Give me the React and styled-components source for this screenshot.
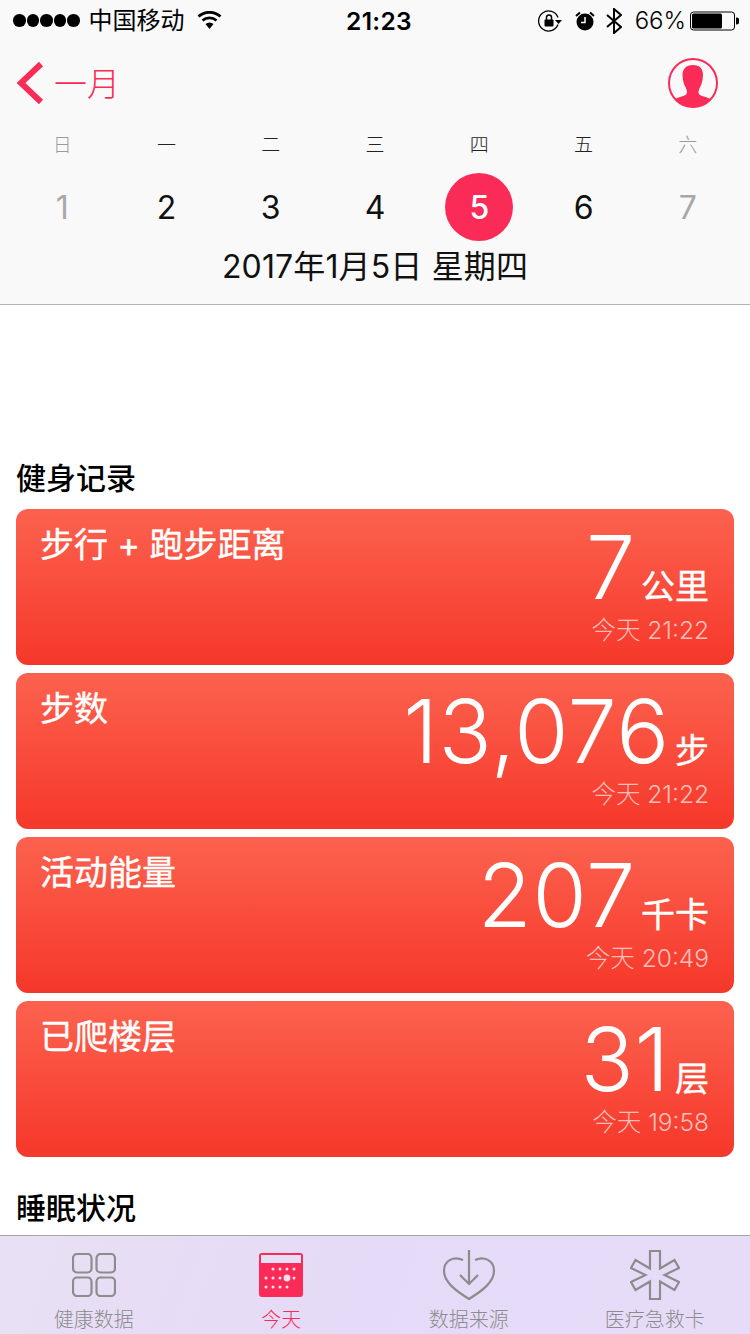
import React from "react";
import styled, { createGlobalStyle } from "styled-components";

const CJK = `"Noto Sans CJK SC", sans-serif`;
const PINK = "#fb2b57";

const GlobalStyle = createGlobalStyle`
	html, body { margin: 0; padding: 0; background: #fff; }
	* { box-sizing: border-box; }
`;

const Page = styled.div`
	width: 750px;
	height: 1334px;
	display: flex;
	flex-direction: column;
	overflow: hidden;
	font-family: "Inter", ${CJK};
	background: #fff;
`;

const Header = styled.header`
	height: 305px;
	flex: none;
	background: #f9f9f9;
	border-bottom: 1px solid #b4b4b4;
`;

const StatusBar = styled.div`
	height: 41px;
	padding: 0 11px 0 13px;
	display: grid;
	grid-template-columns: 1fr auto 1fr;
	align-items: center;
	color: #000;
`;

const StatusSide = styled.div`
	display: flex;
	align-items: center;
	justify-content: ${(p) => (p.$end ? "flex-end" : "flex-start")};
	gap: ${(p) => (p.$end ? "11px" : "0")};
`;

const Dots = styled.div`
	display: flex;
	gap: 1px;
	margin-right: 9px;
`;

const Dot = styled.span`
	width: 12.5px;
	height: 12.5px;
	border-radius: 50%;
	background: #000;
`;

const Carrier = styled.span`
	font-size: 24px;
	line-height: 30px;
	margin-right: 12px;
`;

const Clock = styled.span`
	font-size: 24.5px;
	font-weight: 600;
	letter-spacing: 0.3px;
	margin-left: 6px;
`;

const Battery = styled.span`
	font-size: 24px;
	margin-left: 2px;
	margin-right: -7px;
	font-weight: 300;
`;

const NavRow = styled.div`
	height: 84px;
	padding: 0 32px 0 16px;
	display: flex;
	align-items: center;
	justify-content: space-between;
	color: ${PINK};
`;

const BackLink = styled.div`
	display: flex;
	align-items: center;
	gap: 8px;
	font-family: ${CJK};
	font-size: 33px;
	line-height: 38px;
	font-weight: 300;
`;

const BackLabel = styled.span`
	padding-bottom: 2px;
`;

const Week = styled.div`
	display: grid;
	grid-template-columns: repeat(7, 1fr);
	padding: 0 10px;
	justify-items: center;
`;

const DayName = styled.div`
	height: 48px;
	font-family: ${CJK};
	font-size: 19px;
	font-weight: 300;
	line-height: 38px;
	color: ${(p) => (p.$muted ? "#9a9a9a" : "#222")};
`;

const DayNum = styled.div`
	width: 68px;
	height: 68px;
	border-radius: 50%;
	display: flex;
	align-items: center;
	justify-content: center;
	font-family: "Inter", sans-serif;
	font-size: 32px;
	font-weight: ${(p) => (p.$active ? 500 : 400)};
	background: ${(p) => (p.$active ? PINK : "transparent")};
	color: ${(p) => (p.$active ? "#fff" : p.$muted ? "#a8a8a8" : "#111")};
`;

const DateLine = styled.div`
	text-align: center;
	font-size: 32px;
	line-height: 52px;
	font-weight: 400;
	letter-spacing: 0.15px;
	color: #111;
`;

const Content = styled.main`
	flex: 1;
	min-height: 0;
	padding: 151px 16px 0;
`;

const SectionTitle = styled.h2`
	margin: 0;
	font-family: ${CJK};
	font-size: 30px;
	font-weight: 500;
	line-height: 40px;
	color: #000;
`;

const CardList = styled.div`
	margin: 13px 0 29px;
	display: flex;
	flex-direction: column;
	gap: 8px;
`;

const Card = styled.section`
	height: 156px;
	padding: 10px 25px 0 24px;
	border-radius: 12px;
	display: flex;
	justify-content: space-between;
	color: #fff;
	background: linear-gradient(180deg, #fc624f 0%, #f63a2c 94%, #f2392c 100%);
`;

const CardTitle = styled.div`
	margin-top: 2px;
	font-family: "Inter", ${CJK};
	font-size: 34px;
	font-weight: 400;
	line-height: 48px;
	-webkit-text-stroke: 0.4px #fff;
`;

const Readout = styled.div`
	display: flex;
	flex-direction: column;
	align-items: flex-end;
`;

const ValueRow = styled.div`
	display: flex;
	align-items: baseline;
	gap: 5px;
	height: 96px;
	line-height: 96px;
`;

const Value = styled.span`
	font-family: "Inter", sans-serif;
	font-size: 88px;
	font-weight: 280;
	letter-spacing: 0.8px;
`;

const Unit = styled.span`
	font-family: ${CJK};
	font-size: 34px;
	font-weight: 400;
	-webkit-text-stroke: 0.4px #fff;
`;

const Stamp = styled.div`
	font-size: 24.5px;
	line-height: 30px;
	font-weight: 300;
	color: rgba(255, 255, 255, 0.68);
`;

const TabBar = styled.nav`
	height: 99px;
	flex: none;
	border-top: 1px solid #a9a6a4;
	display: grid;
	grid-template-columns: repeat(4, 1fr);
	background: linear-gradient(110deg, #e8e0f4 0%, #e5daf7 50%, #e7dcf8 100%);
`;

const Tab = styled.div`
	display: flex;
	flex-direction: column;
	align-items: center;
	padding-top: 13px;
	color: ${(p) => (p.$active ? PINK : "#8d8b8e")};

	&:last-child {
		padding-right: 3px;
	}
`;

const TabIcon = styled.div`
	height: 52px;
	display: flex;
	align-items: center;
	justify-content: center;
`;

const TabLabel = styled.span`
	margin-top: 5px;
	font-family: ${CJK};
	font-size: 20px;
	font-weight: 300;
	line-height: 26px;
	white-space: nowrap;
`;

function Wifi() {
	return (
		<svg width="25" height="19" viewBox="0 0 25 19">
			<path d="M12.5 18l-4-5a6 6 0 0 1 8 0z" fill="#000" />
			<path d="M5.5 9.5a10.5 10.5 0 0 1 14 0M1.5 5.5a16.5 16.5 0 0 1 22 0" fill="none" stroke="#000" strokeWidth="2.8" />
		</svg>
	);
}

function RotationLock() {
	return (
		<svg width="26" height="22" viewBox="0 0 26 22">
			<path d="M20 7.500A10 10 0 1 0 20 14.500" fill="none" stroke="#000" strokeWidth="1.300" />
			<path d="M17 10h7l-3.500 4z" fill="#000" />
			<rect x="6.500" y="9.500" width="9" height="7" rx="1" fill="#000" />
			<path d="M8.500 10V7.500a2.500 2.500 0 0 1 5 0V10" fill="none" stroke="#000" strokeWidth="1.500" />
		</svg>
	);
}

function Alarm() {
	return (
		<svg width="20" height="20" viewBox="0 0 20 20">
			<circle cx="10" cy="11" r="8.500" fill="#000" />
			<path d="M10 6v5.500H6" fill="none" stroke="#fff" strokeWidth="1.500" />
			<path d="M1 5l4-3.500M19 5l-4-3.500" stroke="#000" strokeWidth="2" />
		</svg>
	);
}

function Bluetooth() {
	return (
		<svg width="16" height="26" viewBox="0 0 16 26">
			<path d="M1 7l14 12-7 6V1l7 6L1 19" fill="none" stroke="#000" strokeWidth="2" />
		</svg>
	);
}

function BatteryIcon() {
	return (
		<svg width="49" height="20" viewBox="0 0 49 20">
			<rect x="0.500" y="1" width="44" height="18" rx="3" fill="none" stroke="#000" strokeWidth="1" />
			<rect x="2" y="2.500" width="30" height="15" rx="1.500" fill="#000" />
			<path d="M46 6.500a3.500 3.500 0 0 1 0 7z" fill="#000" />
		</svg>
	);
}

function Chevron() {
	return (
		<svg width="30" height="44" viewBox="0 0 30 44">
			<path d="M25 3L5 22l20 19" fill="none" stroke={PINK} strokeWidth="6" />
		</svg>
	);
}

function Profile() {
	return (
		<svg width="50" height="50" viewBox="0 0 50 50">
			<defs>
				<clipPath id="avatar">
					<circle cx="25" cy="25" r="24" />
				</clipPath>
			</defs>
			<circle cx="25" cy="25" r="24" fill="none" stroke={PINK} strokeWidth="2" />
			<path
				clipPath="url(#avatar)"
				d="M25 7c7 0 10 4 10 10 0 3-.5 6-1.500 9-1 3-3 5-3 8 0 3 3 4 7 5 4 1 7 3 9 6v5H3v-5c2-3 5-5 9-6 4-1 7-2 7-5 0-3-2-5-3-8-1-3-1.500-6-1.500-9C14.500 11 18 7 25 7z"
				fill={PINK}
			/>
		</svg>
	);
}

function GridIcon() {
	return (
		<svg width="44" height="44" viewBox="0 0 44 44" fill="none" stroke="currentColor" strokeWidth="2.200">
			<rect x="1" y="1" width="18.500" height="18.500" rx="4" />
			<rect x="24.500" y="1" width="18.500" height="18.500" rx="4" />
			<rect x="1" y="24.500" width="18.500" height="18.500" rx="4" />
			<rect x="24.500" y="24.500" width="18.500" height="18.500" rx="4" />
		</svg>
	);
}

function CalendarIcon() {
	const dots = [
		[14, 16], [21, 16], [28, 16], [35, 16],
		[7, 25], [14, 25], [21, 25], [35, 25],
		[7, 34], [14, 34], [21, 34], [28, 34],
	];
	return (
		<svg width="44" height="44" viewBox="0 0 44 44">
			<rect x="0" y="0" width="44" height="44" rx="3" fill={PINK} />
			<rect x="2" y="2" width="40" height="8" fill="#e8def5" />
			{dots.map(([x, y]) => (
				<circle key={`${x}-${y}`} cx={x} cy={y} r="1.500" fill="#f5e0ea" />
			))}
			<circle cx="28" cy="25" r="3.400" fill="#f5e0ea" />
		</svg>
	);
}

function HeartIcon() {
	return (
		<svg width="54" height="50" viewBox="0 0 54 50" fill="none" stroke="currentColor" strokeWidth="2.200">
			<path d="M21 10C12 6 2 10 2 21c0 11 12 20 25 28 13-8 25-17 25-28 0-11-10-15-19-11" />
			<path d="M27 0v34M18 25l9 9 9-9" />
		</svg>
	);
}

function StarIcon() {
	return (
		<svg width="50" height="50" viewBox="0 0 50 50" fill="none" stroke="currentColor" strokeWidth="2.200">
			<path d="M20 1h10v17.500l14.500-8.500 4.500 8-14.500 7 14.500 7-4.500 8-14.500-8.500V49H20V31.500L5.500 40 1 32l14.500-7L1 18l4.500-8L20 18.500z" />
		</svg>
	);
}

const days = [
	{ name: "日", num: 1, muted: true },
	{ name: "一", num: 2 },
	{ name: "二", num: 3 },
	{ name: "三", num: 4 },
	{ name: "四", num: 5, active: true },
	{ name: "五", num: 6 },
	{ name: "六", num: 7, muted: true },
];

const records = [
	{ title: "步行 + 跑步距离", value: "7", unit: "公里", stamp: "今天 21:22" },
	{ title: "步数", value: "13,076", unit: "步", stamp: "今天 21:22" },
	{ title: "活动能量", value: "207", unit: "千卡", stamp: "今天 20:49" },
	{ title: "已爬楼层", value: "31", unit: "层", stamp: "今天 19:58" },
];

const tabs = [
	{ label: "健康数据", icon: <GridIcon /> },
	{ label: "今天", icon: <CalendarIcon />, active: true },
	{ label: "数据来源", icon: <HeartIcon /> },
	{ label: "医疗急救卡", icon: <StarIcon /> },
];

export default function App() {
	return (
		<Page>
			<GlobalStyle />
			<Header>
				<StatusBar>
					<StatusSide>
						<Dots>
							{[0, 1, 2, 3, 4].map((i) => (
								<Dot key={i} />
							))}
						</Dots>
						<Carrier>中国移动</Carrier>
						<Wifi />
					</StatusSide>
					<Clock>21:23</Clock>
					<StatusSide $end>
						<RotationLock />
						<Alarm />
						<Bluetooth />
						<Battery>66%</Battery>
						<BatteryIcon />
					</StatusSide>
				</StatusBar>
				<NavRow>
					<BackLink>
						<Chevron />
						<BackLabel>一月</BackLabel>
					</BackLink>
					<Profile />
				</NavRow>
				<Week>
					{days.map((d) => (
						<DayName key={d.name} $muted={d.muted}>
							{d.name}
						</DayName>
					))}
					{days.map((d) => (
						<DayNum key={d.num} $muted={d.muted} $active={d.active}>
							{d.num}
						</DayNum>
					))}
				</Week>
				<DateLine>2017年1月5日 星期四</DateLine>
			</Header>
			<Content>
				<SectionTitle>健身记录</SectionTitle>
				<CardList>
					{records.map((r) => (
						<Card key={r.title}>
							<CardTitle>{r.title}</CardTitle>
							<Readout>
								<ValueRow>
									<Value>{r.value}</Value>
									<Unit>{r.unit}</Unit>
								</ValueRow>
								<Stamp>{r.stamp}</Stamp>
							</Readout>
						</Card>
					))}
				</CardList>
				<SectionTitle>睡眠状况</SectionTitle>
			</Content>
			<TabBar>
				{tabs.map((t) => (
					<Tab key={t.label} $active={t.active}>
						<TabIcon>{t.icon}</TabIcon>
						<TabLabel>{t.label}</TabLabel>
					</Tab>
				))}
			</TabBar>
		</Page>
	);
}
